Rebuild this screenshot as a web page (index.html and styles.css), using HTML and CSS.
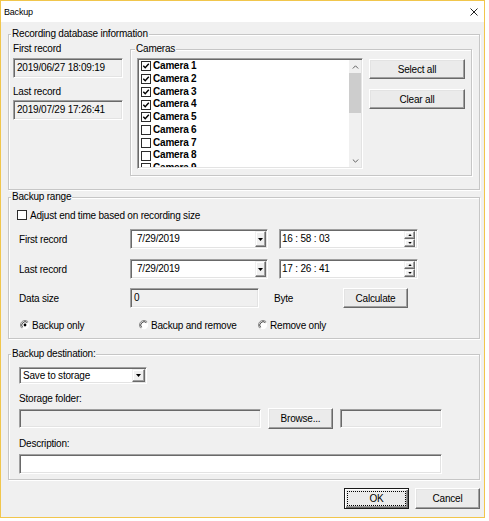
FILE: index.html
```html
<!DOCTYPE html>
<html>
<head>
<meta charset="utf-8">
<title>Backup</title>
<link rel="stylesheet" href="styles.css">
</head>
<body>
<div class="window">
  <div class="titlebar">
    <span class="title">Backup</span>
    <svg class="close" width="8" height="8" viewBox="0 0 8 8"><path d="M0.5 0.5L7.5 7.5M7.5 0.5L0.5 7.5" stroke="#222" stroke-width="1" fill="none"/></svg>
  </div>
  <div class="content">
    <div class="group g1">
      <span class="legend">Recording database information</span>
      <div class="rec-col">
        <div class="lbl">First record</div>
        <div class="static sunken s-first">2019/06/27 18:09:19</div>
        <div class="lbl lbl-last">Last record</div>
        <div class="static sunken s-last">2019/07/29 17:26:41</div>
      </div>
      <div class="group cams">
        <span class="legend">Cameras</span>
        <div class="listbox sunken">
          <div class="items">
            <div class="item"><span class="cb"><svg width="8" height="8" viewBox="0 0 8 8"><path d="M1.3 3.8L3.2 5.8L6.8 1.8" stroke="#000" stroke-width="1.4" fill="none"/></svg></span>Camera 1</div>
            <div class="item"><span class="cb"><svg width="8" height="8" viewBox="0 0 8 8"><path d="M1.3 3.8L3.2 5.8L6.8 1.8" stroke="#000" stroke-width="1.4" fill="none"/></svg></span>Camera 2</div>
            <div class="item"><span class="cb"><svg width="8" height="8" viewBox="0 0 8 8"><path d="M1.3 3.8L3.2 5.8L6.8 1.8" stroke="#000" stroke-width="1.4" fill="none"/></svg></span>Camera 3</div>
            <div class="item"><span class="cb"><svg width="8" height="8" viewBox="0 0 8 8"><path d="M1.3 3.8L3.2 5.8L6.8 1.8" stroke="#000" stroke-width="1.4" fill="none"/></svg></span>Camera 4</div>
            <div class="item"><span class="cb"><svg width="8" height="8" viewBox="0 0 8 8"><path d="M1.3 3.8L3.2 5.8L6.8 1.8" stroke="#000" stroke-width="1.4" fill="none"/></svg></span>Camera 5</div>
            <div class="item"><span class="cb"></span>Camera 6</div>
            <div class="item"><span class="cb"></span>Camera 7</div>
            <div class="item"><span class="cb"></span>Camera 8</div>
            <div class="item"><span class="cb"></span>Camera 9</div>
            <div class="item"><span class="cb"></span>Camera 10</div>
          </div>
          <div class="vscroll">
            <div class="sarrow"><svg width="7" height="4" viewBox="0 0 7 4"><path d="M0.8 3.5L3.5 0.8L6.2 3.5" stroke="#606060" stroke-width="1" fill="none"/></svg></div>
            <div class="thumb"></div>
            <div class="strack"></div>
            <div class="sarrow"><svg width="7" height="4" viewBox="0 0 7 4"><path d="M0.8 0.5L3.5 3.2L6.2 0.5" stroke="#606060" stroke-width="1" fill="none"/></svg></div>
          </div>
        </div>
        <div class="cam-btns">
          <div class="btn">Select all</div>
          <div class="btn">Clear all</div>
        </div>
      </div>
    </div>

    <div class="group g2">
      <span class="legend">Backup range</span>
      <div class="chk-row"><span class="cb"></span>Adjust end time based on recording size</div>
      <div class="form-row r1">
        <span class="flabel">First record</span>
        <div class="combo sunken"><span class="ctext">7/29/2019</span><span class="dbtn"><svg width="5" height="3" viewBox="0 0 5 3"><path d="M0 0H5L2.5 3Z" fill="#000"/></svg></span></div>
        <div class="timefld sunken"><span class="ttext">16 : 58 : 03</span><span class="spin"><span class="sbtn"><svg width="5" height="3" viewBox="0 0 5 3"><path d="M0 3H5L2.5 0Z" fill="#000"/></svg></span><span class="sbtn"><svg width="5" height="3" viewBox="0 0 5 3"><path d="M0 0H5L2.5 3Z" fill="#000"/></svg></span></span></div>
      </div>
      <div class="form-row r2">
        <span class="flabel">Last record</span>
        <div class="combo sunken"><span class="ctext">7/29/2019</span><span class="dbtn"><svg width="5" height="3" viewBox="0 0 5 3"><path d="M0 0H5L2.5 3Z" fill="#000"/></svg></span></div>
        <div class="timefld sunken"><span class="ttext">17 : 26 : 41</span><span class="spin"><span class="sbtn"><svg width="5" height="3" viewBox="0 0 5 3"><path d="M0 3H5L2.5 0Z" fill="#000"/></svg></span><span class="sbtn"><svg width="5" height="3" viewBox="0 0 5 3"><path d="M0 0H5L2.5 3Z" fill="#000"/></svg></span></span></div>
      </div>
      <div class="form-row r3">
        <span class="flabel">Data size</span>
        <div class="static sunken datafld">0</div>
        <span class="byte">Byte</span>
        <div class="btn calc">Calculate</div>
      </div>
      <div class="radio-row">
        <span class="radio"><svg width="10" height="10" viewBox="0 0 10 10"><circle cx="5" cy="5" r="4.2" fill="#fff"/><path d="M1.8 8.2A4.5 4.5 0 0 1 8.2 1.8" stroke="#8a8a8a" stroke-width="1" fill="none"/><path d="M2.6 7.4A3.4 3.4 0 0 1 7.4 2.6" stroke="#404040" stroke-width="1" fill="none"/><circle cx="5" cy="5" r="1.4" fill="#000"/></svg>Backup only</span>
        <span class="radio"><svg width="10" height="10" viewBox="0 0 10 10"><circle cx="5" cy="5" r="4.2" fill="#fff"/><path d="M1.8 8.2A4.5 4.5 0 0 1 8.2 1.8" stroke="#8a8a8a" stroke-width="1" fill="none"/><path d="M2.6 7.4A3.4 3.4 0 0 1 7.4 2.6" stroke="#404040" stroke-width="1" fill="none"/></svg>Backup and remove</span>
        <span class="radio"><svg width="10" height="10" viewBox="0 0 10 10"><circle cx="5" cy="5" r="4.2" fill="#fff"/><path d="M1.8 8.2A4.5 4.5 0 0 1 8.2 1.8" stroke="#8a8a8a" stroke-width="1" fill="none"/><path d="M2.6 7.4A3.4 3.4 0 0 1 7.4 2.6" stroke="#404040" stroke-width="1" fill="none"/></svg>Remove only</span>
      </div>
    </div>

    <div class="group g3">
      <span class="legend">Backup destination:</span>
      <div class="select sunken"><span class="ctext">Save to storage</span><span class="dbtn"><svg width="5" height="3" viewBox="0 0 5 3"><path d="M0 0H5L2.5 3Z" fill="#000"/></svg></span></div>
      <div class="lbl dlbl">Storage folder:</div>
      <div class="storage-row">
        <div class="static sunken stfld"></div>
        <div class="btn browse">Browse...</div>
        <div class="static sunken stfld2"></div>
      </div>
      <div class="lbl dlbl">Description:</div>
      <div class="edit sunken descfld"></div>
    </div>

    <div class="footer">
      <div class="btn default">OK</div>
      <div class="btn">Cancel</div>
    </div>
  </div>
</div>
</body>
</html>
```

FILE: styles.css
```css
* { box-sizing: border-box; }
html, body { margin: 0; padding: 0; background: #fff; }
body {
  font-family: "Liberation Sans", Arial, sans-serif;
  font-size: 10px;
  letter-spacing: -0.2px;
  color: #000;
  width: 489px;
  height: 521px;
  overflow: hidden;
}
.window {
  width: 485px;
  height: 518px;
  border: 1px solid #f1c64c;
  background: #f0f0f0;
  display: flex;
  flex-direction: column;
}
.titlebar {
  height: 21px;
  background: #fff;
  display: flex;
  align-items: center;
  justify-content: space-between;
  padding: 0 6px 0 3px;
  flex: none;
}
.title { font-size: 9px; letter-spacing: -0.2px; color: #000; }
.close { display: block; }

.content {
  padding: 12px 4px 0 7px;
  display: flex;
  flex-direction: column;
}

.group {
  position: relative;
  border: 1px solid #c6c6c6;
  box-shadow: inset 1px 1px 0 #fff, 1px 1px 0 #fff;
  flex: none;
}
.legend {
  position: absolute;
  top: -7px;
  left: 2px;
  line-height: 12px;
  height: 12px;
  padding: 0 1px;
  background: #f0f0f0;
  white-space: nowrap;
}

.sunken {
  border: 1px solid;
  border-color: #a0a0a0 #fff #fff #a0a0a0;
  box-shadow: inset 1px 1px 0 #696969, inset -1px -1px 0 #e3e3e3;
  padding: 1px;
}

.lbl { height: 12px; line-height: 12px; white-space: nowrap; }

/* group 1 */
.g1 {
  height: 156px;
  display: flex;
  align-items: flex-start;
  padding: 8px 7px 0 4px;
}
.rec-col { width: 110px; flex: none; }
.static {
  background: #f0f0f0;
  height: 20px;
  line-height: 16px;
  padding-left: 3px;
  white-space: nowrap;
}
.s-first { margin-top: 3px; }
.lbl-last { margin-top: 8px; }
.s-last { margin-top: 2px; }

.cams {
  margin: 6px 0 0 7px;
  width: 342px;
  height: 127px;
  display: flex;
  align-items: flex-start;
  padding: 8px 6px 0 6px;
}
.cams .legend { left: 4px; }
.listbox {
  width: 226px;
  height: 111px;
  background: #fff;
  display: flex;
  flex: none;
}
.items {
  flex: 1;
  overflow: hidden;
}
.item {
  height: 12.75px;
  line-height: 12.75px;
  display: flex;
  align-items: center;
  padding-left: 2px;
  font-weight: bold;
  white-space: nowrap;
}
.cb {
  width: 10px;
  height: 10px;
  border: 1px solid #2b2b2b;
  background: #fff;
  flex: none;
  margin-right: 2px;
  display: flex;
  align-items: center;
  justify-content: center;
}
.cb svg { display: block; }
.vscroll {
  width: 12px;
  flex: none;
  background: #f0f0f0;
  display: flex;
  flex-direction: column;
}
.sarrow {
  height: 13px;
  display: flex;
  align-items: center;
  justify-content: center;
  flex: none;
}
.sarrow svg { display: block; }
.thumb { height: 40px; background: #cdcdcd; flex: none; }
.strack { flex: 1; }

.cam-btns {
  margin: 1px 0 0 6px;
  width: 96px;
  display: flex;
  flex-direction: column;
  gap: 10px;
  flex: none;
}
.btn {
  height: 20px;
  border: 1px solid;
  border-color: #fff #696969 #696969 #fff;
  box-shadow: inset -1px -1px 0 #a0a0a0, inset 1px 1px 0 #e3e3e3;
  background: #ebebeb;
  display: flex;
  align-items: center;
  justify-content: center;
  white-space: nowrap;
}

/* group 2 */
.g2 {
  margin-top: 7px;
  height: 142px;
  padding: 11px 0 0 8px;
}
.chk-row {
  height: 12px;
  display: flex;
  align-items: center;
  white-space: nowrap;
}
.chk-row .cb { margin-right: 3px; }
.form-row {
  display: flex;
  align-items: center;
  height: 20px;
  padding-left: 2px;
}
.r1 { margin-top: 8px; }
.r2 { margin-top: 10px; }
.r3 { margin-top: 9px; }
.flabel { width: 111px; flex: none; white-space: nowrap; }
.combo, .select, .timefld {
  height: 20px;
  background: #fff;
  display: flex;
  align-items: stretch;
  flex: none;
}
.combo { width: 138px; }
.timefld { width: 139px; margin-left: 11px; }
.ctext { flex: 1; line-height: 16px; padding-left: 5px; white-space: nowrap; }
.ttext { flex: 1; line-height: 16px; padding-left: 1px; white-space: nowrap; }
.dbtn {
  width: 11px;
  flex: none;
  border: 1px solid;
  border-color: #f0f0f0 #696969 #696969 #f0f0f0;
  background: #f0f0f0;
  box-shadow: inset -1px -1px 0 #a0a0a0, inset 1px 1px 0 #fff;
  display: flex;
  align-items: center;
  justify-content: center;
}
.dbtn svg { display: block; }
.spin {
  width: 11px;
  flex: none;
  display: flex;
  flex-direction: column;
  margin-right: 1px;
}
.sbtn {
  flex: 1;
  border: 1px solid;
  border-color: #f0f0f0 #696969 #696969 #f0f0f0;
  background: #f0f0f0;
  box-shadow: inset -1px -1px 0 #a0a0a0, inset 1px 1px 0 #fff;
  display: flex;
  align-items: center;
  justify-content: center;
}
.sbtn svg { display: block; width: 4px; height: 2px; }
.datafld { width: 129px; flex: none; }
.byte { width: 69px; margin-left: 15px; flex: none; }
.calc { width: 65px; flex: none; }
.radio-row {
  margin-top: 11px;
  height: 12px;
  display: flex;
  align-items: center;
  padding-left: 3px;
}
.radio {
  width: 119px;
  flex: none;
  display: flex;
  align-items: center;
  white-space: nowrap;
}
.radio svg { display: block; margin-right: 2px; flex: none; }

/* group 3 */
.g3 {
  margin-top: 15px;
  height: 126px;
  padding: 12px 0 0 10px;
}
.select { width: 128px; height: 17px; }
.select .ctext { padding-left: 2px; line-height: 13px; }
.select .dbtn { width: 13px; }
.dlbl { margin-top: 9px; }
.storage-row {
  margin-top: 3px;
  height: 21px;
  display: flex;
  align-items: center;
}
.stfld { width: 242px; height: 19px; flex: none; }
.browse { width: 65px; height: 21px; margin-left: 7px; flex: none; }
.stfld2 { width: 102px; height: 19px; margin-left: 7px; flex: none; }
.g3 .dlbl + .descfld { margin-top: 4px; }
.edit { background: #fff; }
.descfld { width: 423px; height: 20px; }
.g3 .dlbl:nth-of-type(3) { margin-top: 8px; }

/* footer */
.footer {
  margin-top: 8px;
  display: flex;
  justify-content: flex-end;
  gap: 6px;
}
.footer .btn { width: 65px; height: 21px; }
.btn.default {
  position: relative;
  border: 1px solid #1a1a1a;
  box-shadow: inset 1px 1px 0 #fff, inset -1px -1px 0 #696969, inset -2px -2px 0 #a0a0a0;
}
.btn.default::after {
  content: "";
  position: absolute;
  left: 2px;
  top: 2px;
  right: 2px;
  bottom: 2px;
  border: 1px dotted #000;
}
```
